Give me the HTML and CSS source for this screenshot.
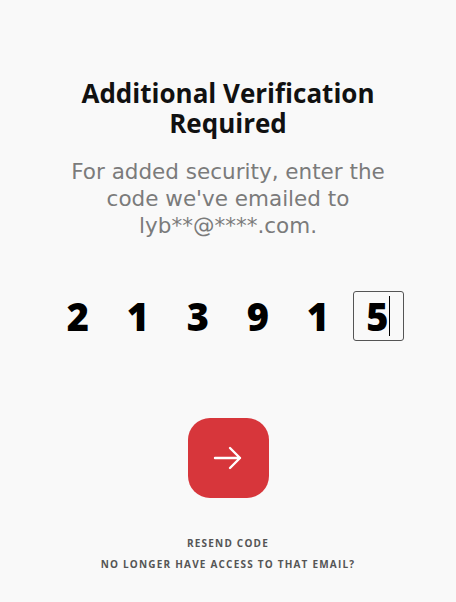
FILE: index.html
```html
<!DOCTYPE html>
<html lang="en">
<head>
    <meta charset="UTF-8">
    <meta name="viewport" content="width=device-width, initial-scale=1.0">
    <title>Additional Verification Required</title>
    <link rel="stylesheet" href="styles.css">
</head>
<body>
    <div class="container">
        <h1>Additional Verification Required</h1>
        <p class="intro">For added security, enter the code we've emailed to lyb**@****.com.</p>
        <div class="code-row">
            <div class="digit">2</div>
            <div class="digit">1</div>
            <div class="digit">3</div>
            <div class="digit">9</div>
            <div class="digit">1</div>
            <div class="digit active">5<span class="caret"></span></div>
        </div>
        <button class="submit" aria-label="Continue">
            <svg width="30" height="30" viewBox="0 0 30 30" fill="none" stroke="#fff" stroke-width="2.4" stroke-linecap="round" stroke-linejoin="round">
                <path d="M2 15h25M17 5l10 10-10 10"/>
            </svg>
        </button>
        <div class="links">
            <a href="#">Resend code</a>
            <a href="#">No longer have access to that email?</a>
        </div>
    </div>
</body>
</html>
```

FILE: styles.css
```css
body {
    margin: 0;
    padding: 0;
    background-color: #f9f9f9;
    font-family: 'Open Sans', sans-serif;
}
.container {
    width: 456px;
    height: 602px;
    display: flex;
    flex-direction: column;
    align-items: center;
    padding-top: 78px;
    box-sizing: border-box;
}
h1 {
    margin: 0;
    width: 330px;
    text-align: center;
    font-size: 26px;
    line-height: 30px;
    font-weight: 700;
    color: #111;
}
.intro {
    margin: 20px 0 0;
    width: 340px;
    text-align: center;
    font-family: 'DejaVu Sans', sans-serif;
    font-size: 21.5px;
    line-height: 27px;
    color: #7b7b7b;
}
.code-row {
    display: flex;
    gap: 9px;
    margin-top: 52px;
}
.digit {
    width: 51px;
    height: 50px;
    box-sizing: border-box;
    display: flex;
    justify-content: center;
    align-items: center;
    font-size: 38px;
    font-weight: 800;
    color: #000;
    border: 1px solid transparent;
    border-radius: 3px;
}
.digit.active {
    border-color: #555;
}
.caret {
    width: 1px;
    height: 40px;
    background-color: #000;
}
.submit {
    margin-top: 77px;
    width: 81px;
    height: 80px;
    border: none;
    border-radius: 22px;
    background-color: #d7363b;
    display: flex;
    justify-content: center;
    align-items: center;
    cursor: pointer;
}
.links {
    margin-top: 39px;
    display: flex;
    flex-direction: column;
    align-items: center;
    gap: 8px;
}
.links a {
    font-size: 10px;
    line-height: 13px;
    font-weight: 700;
    letter-spacing: 1.2px;
    text-transform: uppercase;
    text-decoration: none;
    color: #555;
}
```
